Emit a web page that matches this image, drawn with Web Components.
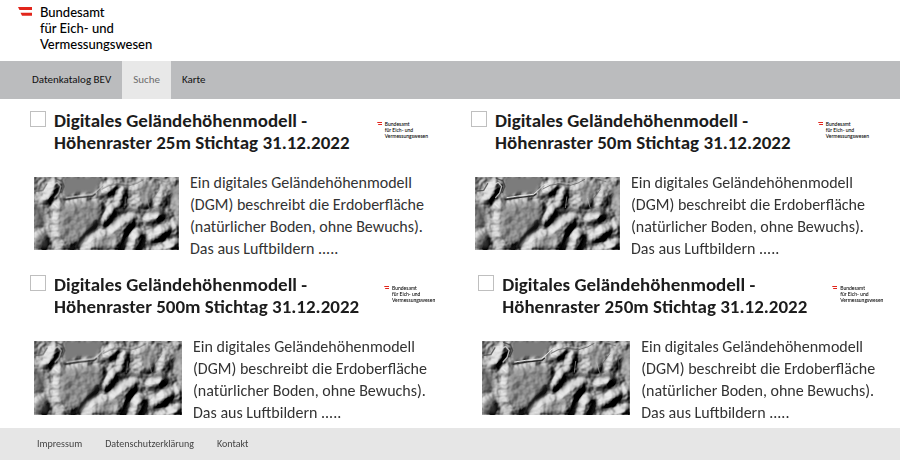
<!DOCTYPE html>
<html lang="de">
<head>
<meta charset="utf-8">
<title>Datenkatalog BEV</title>
<style>
  body { margin: 0; background: #fff; color: #1c1c1c; font-family: Carlito, Lato, "Liberation Sans", sans-serif; }
</style>
</head>
<body>
<catalog-page></catalog-page>

<script>
const define = (name, render) => customElements.define(name, class extends HTMLElement {
  connectedCallback() {
    if (this.shadowRoot) return;
    this.attachShadow({ mode: 'open' }).innerHTML = render(this);
  }
});

// Federal office logo: red flag bars and three lines of text
define('bev-logo', () => `
  <style>
    :host { display: flex; align-items: flex-start; gap: 8px; color: #000; font: 500 13px/16px Lato, sans-serif; white-space: nowrap; --mark: 14px; }
    :host([small]) { gap: 3px; font: 500 5px/6px Lato, sans-serif; --mark: 5px; }
    svg { display: block; width: var(--mark); padding-top: 3px; fill: #e2251b; flex: none; }
    :host([small]) svg { padding-top: 1px; }
    span { display: block; }
  </style>
  <svg viewBox="0 0 14 9" aria-hidden="true"><path d="M0 0H14V3H1.5Z"/><path d="M2.5 5.7H14V8.7H4Z"/></svg>
  <div><span>Bundesamt</span><span>für Eich- und</span><span>Vermessungswesen</span></div>`);

define('nav-link', el => `
  <style>
    :host { display: flex; }
    a { display: flex; align-items: center; padding: 0 11px; color: #111; font-size: 11px; line-height: 16px; text-decoration: none; }
    :host([active]) a { background: #e8e8e8; color: #6d6d6d; }
  </style>
  <a href="#"${el.hasAttribute('active') ? ' aria-current="page"' : ''}><slot></slot></a>`);

define('nav-bar', () => `
  <style>
    :host { display: block; background: #bbbcbe; }
    nav { display: flex; min-height: 38px; padding: 0 21px; }
  </style>
  <nav><slot></slot></nav>`);

// Hillshade relief: the opacity of the shapes is the height of the terrain, lit from the upper left
define('relief-map', () => `
  <style>
    :host { display: block; }
    svg { display: block; width: 100%; height: auto; }
  </style>
  <svg viewBox="0 0 436 218" role="img" aria-label="Schummerung">
    <defs>
      <filter id="lit" filterUnits="userSpaceOnUse" x="0" y="0" width="436" height="218" color-interpolation-filters="sRGB">
        <feGaussianBlur in="SourceAlpha" stdDeviation="6" result="h"/>
        <feTurbulence type="fractalNoise" baseFrequency=".03" numOctaves="3" seed="4" result="t"/>
        <feComposite in="h" in2="t" operator="arithmetic" k2=".6" k3=".36"/>
        <feDiffuseLighting surfaceScale="25" diffuseConstant=".92" lighting-color="#fff"><feDistantLight azimuth="215" elevation="38"/></feDiffuseLighting>
      </filter>
      <filter id="s" x="-20%" y="-20%" width="140%" height="140%"><feGaussianBlur stdDeviation="4"/></filter>
      <filter id="f" x="-10%" y="-10%" width="120%" height="120%"><feGaussianBlur stdDeviation="1.4"/></filter>
    </defs>
    <rect width="436" height="218" fill="#858585"/>
    <g filter="url(#lit)">
      <path opacity=".6" d="M66 80 205 78 210 96 196 134 160 172 112 222H84L62 180Z"/>
      <path opacity=".7" d="M150 222 172 180 232 162 262 128 298 118 304 132 280 166 260 222Z"/>
      <path opacity=".7" d="M18 70 40 58 48 28 66 18 76 32 62 58 44 78Z"/>
      <ellipse opacity=".8" cx="22" cy="192" rx="20" ry="23"/>
      <ellipse opacity=".7" cx="222" cy="118" rx="12" ry="36" transform="rotate(30 222 118)"/>
      <ellipse opacity=".5" cx="228" cy="36" rx="16" ry="24" transform="rotate(38 228 36)"/>
      <ellipse opacity=".55" cx="266" cy="58" rx="10" ry="34" transform="rotate(14 266 58)"/>
      <ellipse opacity=".85" cx="308" cy="196" rx="18" ry="34" transform="rotate(26 308 196)"/>
      <ellipse opacity=".7" cx="362" cy="124" rx="14" ry="30" transform="rotate(60 362 124)"/>
      <ellipse opacity=".75" cx="392" cy="164" rx="16" ry="26" transform="rotate(50 392 164)"/>
      <ellipse opacity=".6" cx="426" cy="158" rx="12" ry="22" transform="rotate(15 426 158)"/>
      <ellipse opacity=".6" cx="358" cy="182" rx="14" ry="20" transform="rotate(30 358 182)"/>
      <path opacity=".8" d="M358 222 398 206 436 186V222Z"/>
      <path opacity=".3" d="M296 14H374L344 96 312 84Z"/>
      <path opacity=".3" d="M380 30H406L402 84 366 92Z"/>
    </g>
    <g filter="url(#s)" fill="none" stroke-linecap="round">
      <path fill="#7c7c7c" d="M92 0H204L182 48 132 46 98 58 84 40Z"/>
      <path fill="#858585" opacity=".6" d="M78 84 186 74 202 98 186 132 130 192 96 196 72 160Z"/>
      <path fill="#4c4c4c" opacity=".6" d="M0 82 28 92 34 116 26 146 0 160Z"/>
      <path fill="#4c4c4c" opacity=".6" d="M6 180 26 172 42 192 40 212H4Z"/>
      <path fill="#9a9a9a" opacity=".5" d="M192 182 236 172 262 148 250 192 224 216H190Z"/>
      <path fill="#a0a0a0" opacity=".6" d="M310 18H372L342 88 320 74Z"/>
      <path fill="#aaa" opacity=".65" d="M408 30H440V124L412 96Z"/>
      <g stroke="#222" stroke-width="9" opacity=".7">
        <path d="M198 136 176 164 132 202 106 218"/>
        <path d="M252 100 284 99 326 104M262 102 236 144"/>
        <path d="M352 104 374 98 396 116"/>
        <path d="M326 214 336 186"/>
        <path d="M268 212 284 184"/>
      </g>
      <g stroke="#e8e8e8" stroke-width="9" opacity=".8">
        <path d="M142 210 160 184 184 170"/>
        <path d="M234 154 260 126 294 116"/>
        <path d="M6 68 32 64 42 44"/>
        <path d="M40 112 36 146"/>
        <path d="M52 178 62 206"/>
      </g>
    </g>
    <g filter="url(#f)" fill="none" stroke-linecap="round" stroke-linejoin="round">
      <path stroke="#ddd" stroke-width="4" opacity=".8" d="M54 24 70 16 80 28 74 48 62 62"/>
      <path stroke="#333" stroke-width="4" opacity=".7" d="M64 4 84 12 90 28 82 46M6 42 26 40 38 20"/>
      <path stroke="#2b2b2b" stroke-width="4" d="M92 68 130 62 176 57 184 51"/>
      <path stroke="#e4e4e4" stroke-width="3" d="M96 62 130 57 176 52 188 42 206 24 226 18"/>
      <path stroke="#555" stroke-width="3" opacity=".7" d="M204 36 226 25 250 21 284 26 310 18 330 7"/>
      <path stroke="#c6c6c6" stroke-width="2" opacity=".8" d="M230 14 284 20 308 12 328 2M276 60 272 92M338 64 346 92M362 2 400 9 430 6"/>
      <path stroke="#555" stroke-width="2" opacity=".8" d="M376 38 352 70M402 50 404 100M362 7 394 14"/>
    </g>
  </svg>`);

define('dataset-card', el => `
  <style>
    :host { display: block; padding: 0 13px 0 30px; }
    header { display: flex; align-items: flex-start; gap: 8px; }
    input { appearance: none; box-sizing: border-box; flex: none; width: 16px; height: 16px; margin: 1px 0 0; border: 1px solid #bfbfbf; background: #fff; }
    h2 { flex: 1; margin: 0; font-size: 19px; line-height: 22px; font-weight: 700; }
    h2 span { display: block; white-space: nowrap; }
    bev-logo { margin-top: 11px; }
    .body { display: flex; align-items: flex-start; gap: 11px; padding: 18px 0 0 4px; }
    relief-map { flex: none; width: var(--map, 145px); margin-top: 5px; }
    p { margin: 0; font-size: 16px; line-height: 22px; color: #333; }
    p span { display: block; white-space: nowrap; }
  </style>
  <header>
    <input type="checkbox" id="pick" aria-labelledby="title">
    <h2 id="title"><label for="pick"><span>Digitales Geländehöhenmodell -</span><span>Höhenraster ${el.getAttribute('grid')} Stichtag 31.12.2022</span></label></h2>
    <bev-logo small></bev-logo>
  </header>
  <div class="body">
    <relief-map></relief-map>
    <p><span>Ein digitales Geländehöhenmodell</span><span>(DGM) beschreibt die Erdoberfläche</span><span>(natürlicher Boden, ohne Bewuchs).</span><span>Das aus Luftbildern .....</span></p>
  </div>`);

define('card-row', () => `
  <style>
    :host { display: grid; grid-template-columns: repeat(2, 49%); }
    :host([wide]) { grid-template-columns: repeat(2, 49.8%); --map: 148px; }
  </style>
  <slot></slot>`);

define('page-footer', () => `
  <style>
    :host { display: block; background: #e6e6e6; }
    footer { display: flex; gap: 23px; padding: 8px 37px; }
    ::slotted(a) { color: #444; font-size: 10px; line-height: 16px; text-decoration: none; }
  </style>
  <footer><slot></slot></footer>`);

define('catalog-page', () => `
  <style>
    :host { display: flex; flex-direction: column; min-height: 100vh; }
    .top { padding: 4px 18px 9px; }
    main { display: flex; flex-direction: column; gap: 14px; flex: 1; padding: 11px 0 4px; }
  </style>
  <div class="top"><bev-logo></bev-logo></div>
  <nav-bar>
    <nav-link>Datenkatalog BEV</nav-link><nav-link active>Suche</nav-link><nav-link>Karte</nav-link>
  </nav-bar>
  <main>
    <card-row><dataset-card grid="25m"></dataset-card><dataset-card grid="50m"></dataset-card></card-row>
    <card-row wide><dataset-card grid="500m"></dataset-card><dataset-card grid="250m"></dataset-card></card-row>
  </main>
  <page-footer><a href="#">Impressum</a><a href="#">Datenschutzerklärung</a><a href="#">Kontakt</a></page-footer>`);
</script>
</body>
</html>
